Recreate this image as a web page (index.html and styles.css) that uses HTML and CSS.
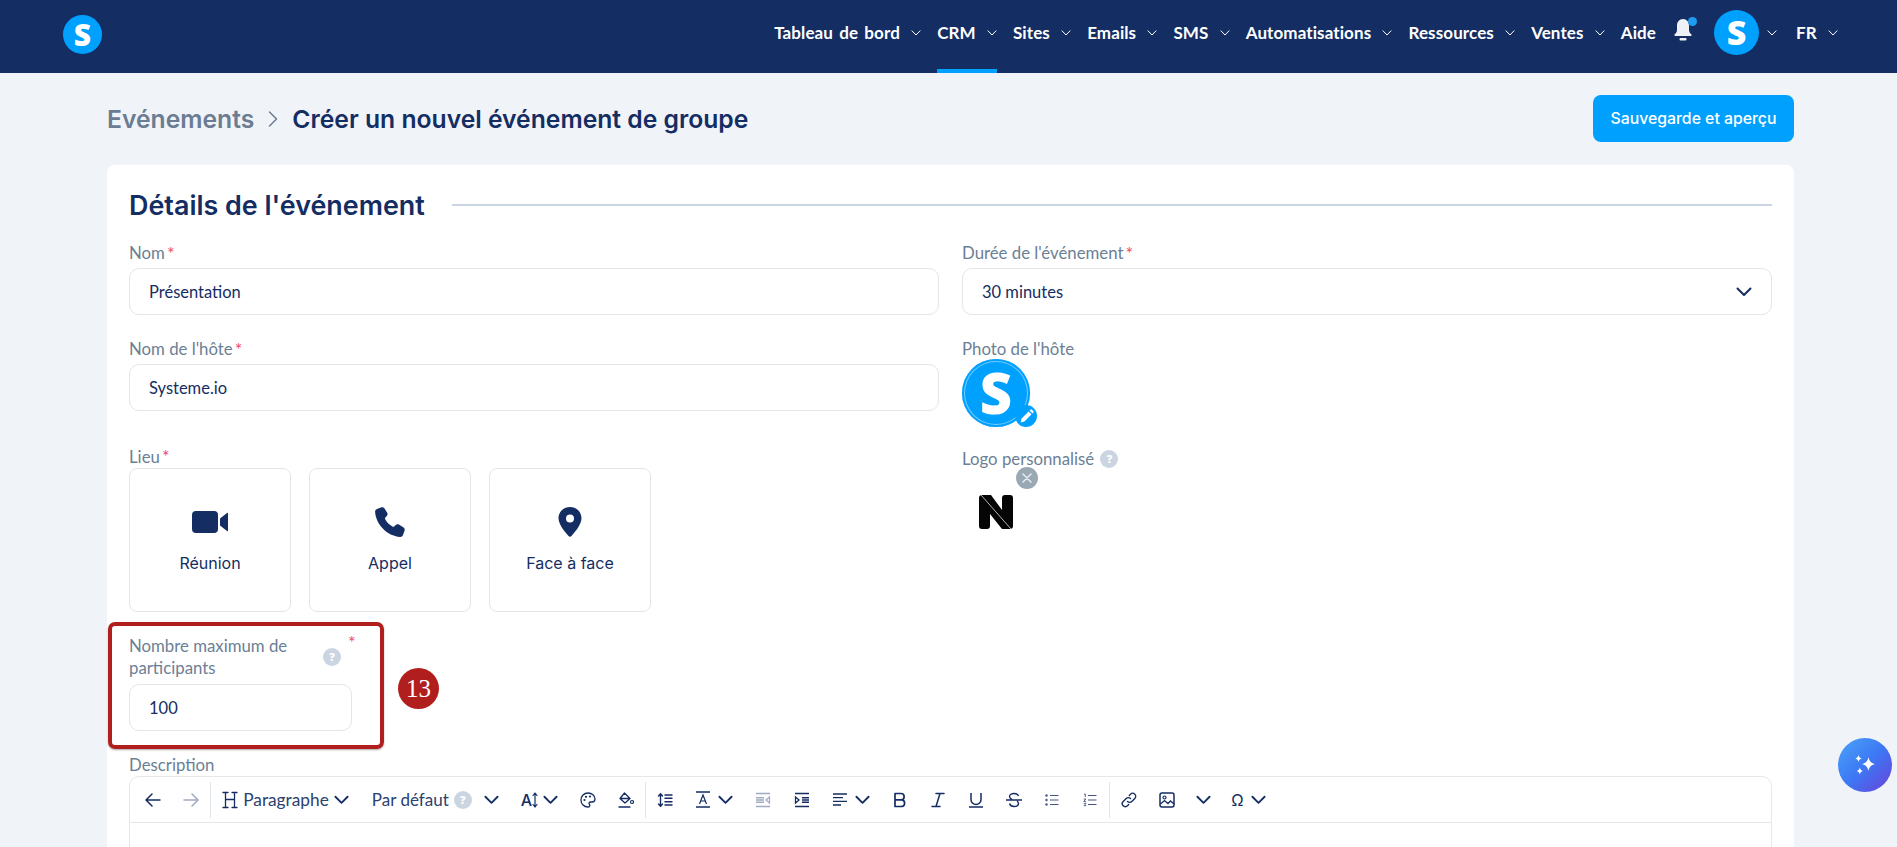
FILE: index.html
```html
<!DOCTYPE html>
<html lang="fr">
<head>
<meta charset="utf-8">
<title>Créer un nouvel événement de groupe</title>
<link rel="stylesheet" href="styles.css">
</head>
<body>
<svg class="sprite" width="0" height="0" aria-hidden="true">
  <symbol id="chev" viewBox="0 0 16 10"><path d="M1.500 1.500 8 8l6.500-6.500" fill="none" stroke="currentColor" stroke-width="2" stroke-linecap="round" stroke-linejoin="round"/></symbol>
  <symbol id="navchev" viewBox="0 0 10 6"><path d="M1 .8 5 5l4-4.200" fill="none" stroke="currentColor" stroke-width="1" stroke-linecap="round" stroke-linejoin="round"/></symbol>
</svg>
<header class="topbar">
  <div class="brand">S</div>
  <nav class="nav">
    <a class="nav-item">Tableau de bord <svg class="nav-chev"><use href="#navchev"/></svg></a>
    <a class="nav-item active">CRM <svg class="nav-chev"><use href="#navchev"/></svg></a>
    <a class="nav-item">Sites <svg class="nav-chev"><use href="#navchev"/></svg></a>
    <a class="nav-item">Emails <svg class="nav-chev"><use href="#navchev"/></svg></a>
    <a class="nav-item">SMS <svg class="nav-chev"><use href="#navchev"/></svg></a>
    <a class="nav-item">Automatisations <svg class="nav-chev"><use href="#navchev"/></svg></a>
    <a class="nav-item">Ressources <svg class="nav-chev"><use href="#navchev"/></svg></a>
    <a class="nav-item">Ventes <svg class="nav-chev"><use href="#navchev"/></svg></a>
    <a class="nav-item">Aide</a>
    <span class="bell">
      <svg viewBox="0 0 18 23" width="18" height="23"><path d="M9 0c3.800 0 6 3 6 6.500v4.500c0 2 1 3.200 2.300 4.300.7.600.3 1.700-.6 1.700H1.300c-.9 0-1.300-1.100-.6-1.700C2 14.200 3 13 3 11V6.500C3 3 5.200 0 9 0z" fill="#eef1f6"/><rect x="5.500" y="19" width="7" height="2.500" rx="1" fill="#eef1f6"/></svg>
      <i class="bell-dot"></i>
    </span>
    <span class="nav-avatar">S</span>
    <svg class="nav-chev avatar-chev"><use href="#navchev"/></svg>
    <a class="nav-item lang">FR <svg class="nav-chev"><use href="#navchev"/></svg></a>
  </nav>
</header>

<main class="page">
  <div class="page-head">
    <h1 class="crumbs">
      <span class="crumb-parent">Evénements</span>
      <svg class="crumb-sep" viewBox="0 0 10 18" width="10" height="18"><path d="M1.500 2 8.500 9l-7 7" fill="none" stroke="#6b7c93" stroke-width="1.500" stroke-linecap="round" stroke-linejoin="round"/></svg>
      <span>Créer un nouvel événement de groupe</span>
    </h1>
    <button class="primary">Sauvegarde et aperçu</button>
  </div>

  <section class="card">
    <div class="card-title"><h2>Détails de l'événement</h2><span class="rule"></span></div>

    <div class="columns">
      <div class="col">
        <div class="field">
          <label class="label">Nom<em>*</em></label>
          <div class="input">Présentation</div>
        </div>
        <div class="field">
          <label class="label">Nom de l'hôte<em>*</em></label>
          <div class="input">Systeme.io</div>
        </div>
        <div class="field field-place">
          <label class="label">Lieu<em>*</em></label>
          <div class="places">
            <div class="place">
              <svg viewBox="0 0 36 24" width="36" height="24"><path d="M4 1h18a4 4 0 0 1 4 4v14a4 4 0 0 1-4 4H4a4 4 0 0 1-4-4V5a4 4 0 0 1 4-4zM28 8.500l7-5.500c.5-.4 1-.1 1 .5V20.500c0 .6-.5.9-1 .5l-7-5.500z" fill="#142d63"/></svg>
              <span>Réunion</span>
            </div>
            <div class="place">
              <svg viewBox="0 0 32 32" width="32" height="32"><path d="M7.500 1.300 3 3C1.700 3.500 1 4.700 1.100 6 2.200 18.800 13 29.800 26 31c1.300.1 2.500-.6 3-1.900l1.600-4.500c.4-1.100 0-2.300-1-3l-4.700-3c-.9-.6-2.100-.5-2.900.2l-1.800 1.600c-.5.400-1.200.5-1.800.2-3-1.700-5.500-4.300-7.200-7.300-.3-.6-.2-1.300.2-1.800l1.600-1.800c.7-.8.800-2 .2-2.900l-3-4.700C9.600 1.200 8.500.9 7.500 1.300z" fill="#142d63"/></svg>
              <span>Appel</span>
            </div>
            <div class="place">
              <svg viewBox="0 0 24 30" width="24" height="30"><path fill-rule="evenodd" d="M12 0C5.400 0 .5 5 .5 11.300c0 6.200 6.400 13.600 10 17.800.8.900 2.200.9 3 0 3.600-4.200 10-11.600 10-17.800C23.500 5 18.600 0 12 0zm0 7.500a4 4 0 1 1 0 8 4 4 0 0 1 0-8z" fill="#142d63"/></svg>
              <span>Face à face</span>
            </div>
          </div>
        </div>
        <div class="field field-max">
          <div class="callout"></div>
          <div class="callout-badge">13</div>
          <label class="label label-max"><span class="label-text">Nombre maximum de participants</span><i class="help">?</i><em>*</em></label>
          <div class="input">100</div>
        </div>
      </div>

      <div class="col">
        <div class="field">
          <label class="label">Durée de l'événement<em>*</em></label>
          <div class="input select">30 minutes
            <svg class="select-chev"><use href="#chev"/></svg>
          </div>
        </div>
        <div class="field field-photo">
          <label class="label">Photo de l'hôte</label>
          <div class="photo">
            <span class="photo-ring">S</span>
            <span class="photo-edit">
              <svg viewBox="0 0 14 14" width="15" height="15"><path d="M1.500 12.500l.9-3.600L9 2.300 11.700 5 5.100 11.600zM9.900 1.400l.8-.8a1 1 0 0 1 1.400 0l1.300 1.300a1 1 0 0 1 0 1.400l-.8.800z" fill="#fff"/></svg>
            </span>
          </div>
        </div>
        <div class="field field-logo">
          <label class="label">Logo personnalisé <i class="help">?</i></label>
          <div class="logo-box">
            <span class="logo-close">
              <svg viewBox="0 0 10 10" width="10" height="10"><path d="M1 1l8 8M9 1 1 9" stroke="#e8edf2" stroke-width="1.500" stroke-linecap="round"/></svg>
            </span>
            <svg class="logo-n" viewBox="0 0 34 34" width="34" height="34"><path d="M3 0h9l11 15V3a3 3 0 0 1 3-3h5a3 3 0 0 1 3 3v28a3 3 0 0 1-3 3h-8L11 19v12a3 3 0 0 1-3 3H3a3 3 0 0 1-3-3V3a3 3 0 0 1 3-3z" fill="#050505"/><path d="M2 0l30 34" stroke="#fff" stroke-width=".7"/></svg>
          </div>
        </div>
      </div>
    </div>

    <div class="field field-desc">
      <label class="label">Description</label>
      <div class="editor">
        <div class="toolbar">
          <button class="tb"><svg viewBox="0 0 16 14" width="16" height="14"><path d="M15 7H1.500M7 1 1 7l6 6" fill="none" stroke="#142d63" stroke-width="1.500" stroke-linecap="round" stroke-linejoin="round"/></svg></button>
          <button class="tb off"><svg viewBox="0 0 16 14" width="16" height="14"><path d="M1 7h13.500M9 1l6 6-6 6" fill="none" stroke="#142d63" stroke-width="1.500" stroke-linecap="round" stroke-linejoin="round"/></svg></button>
          <span class="sep"></span>
          <button class="tb wide tb-h"><svg viewBox="0 0 16 18" width="16" height="18"><path d="M3.500 1.500v15M12.500 1.500v15M3.500 8.500h9M1 1.500h5M10 1.500h5M1 16.500h5M10 16.500h5" fill="none" stroke="#142d63" stroke-width="1.300" stroke-linecap="round"/></svg><span class="tb-text">Paragraphe</span><svg class="chev"><use href="#chev"/></svg></button>
          <button class="tb wide tb-font"><span class="tb-text">Par défaut</span><i class="help">?</i><svg class="chev"><use href="#chev"/></svg></button>
          <button class="tb wide tb-size"><span class="tb-glyph">A</span><svg viewBox="0 0 6 16" width="6" height="16" class="tb-arrow"><path d="M3 1v14M1 3.500 3 1l2 2.500M1 12.500 3 15l2-2.500" fill="none" stroke="#142d63" stroke-width="1.200" stroke-linecap="round" stroke-linejoin="round"/></svg><svg class="chev"><use href="#chev"/></svg></button>
          <button class="tb"><svg viewBox="0 0 16 16" width="16" height="16"><path d="M8 1C4 1 1 4 1 8s3 7 7 7c1.300 0 1.800-.8 1.800-1.600 0-1-.8-1.300-.8-2.100 0-.9.700-1.300 1.500-1.300H12c1.800 0 3-1.200 3-3C15 3.500 12 1 8 1z" fill="none" stroke="#142d63" stroke-width="1.300"/><circle cx="4.500" cy="8" r="1.100" fill="#142d63"/><circle cx="6" cy="4.800" r="1.100" fill="#142d63"/><circle cx="10" cy="4.500" r="1.100" fill="#142d63"/></svg></button>
          <button class="tb"><svg viewBox="0 0 16 16" width="16" height="16"><path d="M6.500 1 12 6.500 7 11 2 6.500zM2.300 6.500h9.400M1 15h11" fill="none" stroke="#142d63" stroke-width="1.300" stroke-linejoin="round" stroke-linecap="round"/><circle cx="14" cy="10" r="1.500" fill="none" stroke="#142d63" stroke-width="1.200"/></svg></button>
          <span class="sep"></span>
          <button class="tb"><svg viewBox="0 0 16 16" width="16" height="16"><path d="M3.500 2v12M1.500 4l2-2.300L5.500 4M1.500 12l2 2.300 2-2.300M8 3h7M8 6.300h7M8 9.700h7M8 13h7" fill="none" stroke="#142d63" stroke-width="1.400" stroke-linecap="round" stroke-linejoin="round"/></svg></button>
          <button class="tb wide tb-color"><svg viewBox="0 0 16 17" width="16" height="17"><path d="M1 1h14M1 16h14" stroke="#142d63" stroke-width="1.500"/><path d="M4.500 13 8 4l3.500 9M5.700 10h4.600" fill="none" stroke="#142d63" stroke-width="1.200"/></svg><svg class="chev"><use href="#chev"/></svg></button>
          <button class="tb off"><svg viewBox="0 0 16 16" width="16" height="16"><path d="M1 1.500h14M1 14.500h14M1 5.800h8M1 8h8M1 10.200h8" stroke="#142d63" stroke-width="1.400"/><path d="M14.500 5 11 8l3.500 3z" fill="none" stroke="#142d63" stroke-width="1.200"/></svg></button>
          <button class="tb"><svg viewBox="0 0 16 16" width="16" height="16"><path d="M1 1.500h14M1 14.500h14M8 5.800h7M8 8h7M8 10.200h7" stroke="#142d63" stroke-width="1.400"/><path d="M1.500 5 5 8l-3.500 3z" fill="none" stroke="#142d63" stroke-width="1.300"/></svg></button>
          <button class="tb wide"><svg viewBox="0 0 16 16" width="16" height="16"><path d="M1 2h14M1 5.700h10M1 9.300h14M1 13h8" stroke="#142d63" stroke-width="1.300"/></svg><svg class="chev"><use href="#chev"/></svg></button>
          <button class="tb"><svg viewBox="0 0 14 16" width="14" height="16"><path d="M2 1.500h6a3 3 0 0 1 0 6.300H2zM2 7.800h6.800a3.400 3.400 0 0 1 0 6.700H2z" fill="none" stroke="#142d63" stroke-width="1.700" stroke-linejoin="round"/></svg></button>
          <button class="tb"><svg viewBox="0 0 14 16" width="14" height="16"><path d="M5 1.500h8M1 14.500h8M9 1.500l-4 13" fill="none" stroke="#142d63" stroke-width="1.500" stroke-linecap="round"/></svg></button>
          <button class="tb"><svg viewBox="0 0 14 16" width="14" height="16"><path d="M2 1v6.500a5 5 0 0 0 10 0V1M0 15h14" fill="none" stroke="#142d63" stroke-width="1.500"/></svg></button>
          <button class="tb"><svg viewBox="0 0 16 16" width="16" height="16"><path d="M12.500 4C12 2.500 10.500 1.500 8 1.500S3.500 2.800 3.500 4.500c0 1.500 1.500 2.500 3 3.500M11 9c1 .7 1.500 1.500 1.500 2.500 0 1.700-2 3-4.500 3s-4-1.300-4.500-3M0 8h16" fill="none" stroke="#142d63" stroke-width="1.400"/></svg></button>
          <button class="tb"><svg viewBox="0 0 14 14" width="14" height="14"><path d="M5 2.500h8.500M5 7h8.500M5 11.500h8.500" stroke="#43557e" stroke-width="1.200"/><circle cx="1.500" cy="2.500" r="1.200" fill="#43557e"/><circle cx="1.500" cy="7" r="1.200" fill="#43557e"/><circle cx="1.500" cy="11.500" r="1.200" fill="#43557e"/></svg></button>
          <button class="tb"><svg viewBox="0 0 14 14" width="14" height="14"><path d="M5 2.500h8.500M5 7h8.500M5 11.500h8.500" stroke="#43557e" stroke-width="1.200"/><path d="M1 1.300 2.300.9v3.200M.7 6h2.200L.8 8.400h2.200M.8 10.300h2.200l-1 1.200 1 1.200H.8" fill="none" stroke="#43557e" stroke-width=".9"/></svg></button>
          <span class="sep sep-tight"></span>
          <button class="tb"><svg viewBox="0 0 16 16" width="16" height="16"><path d="M6.500 9.500a3 3 0 0 0 4.300 0l3-3a3 3 0 0 0-4.300-4.300L8.300 3.400M9.500 6.500a3 3 0 0 0-4.300 0l-3 3a3 3 0 0 0 4.300 4.300l1.200-1.200" fill="none" stroke="#142d63" stroke-width="1.400" stroke-linecap="round"/></svg></button>
          <button class="tb"><svg viewBox="0 0 16 16" width="16" height="16"><rect x="1" y="1" width="14" height="14" rx="2" fill="none" stroke="#142d63" stroke-width="1.500"/><circle cx="5.500" cy="5.500" r="1.500" fill="none" stroke="#142d63" stroke-width="1.200"/><path d="M1.500 12 5.500 8.500l3.500 3 2.500-2.500 3.500 3" fill="none" stroke="#142d63" stroke-width="1.300"/></svg></button>
          <button class="tb tb-only"><svg class="chev"><use href="#chev"/></svg></button>
          <button class="tb wide tb-omega"><span class="tb-glyph tb-glyph-light">Ω</span><svg class="chev"><use href="#chev"/></svg></button>
        </div>
        <div class="editor-body"></div>
      </div>
    </div>
  </section>
</main>

<button class="assistant" aria-label="Assistant">
  <svg viewBox="0 0 28 28" width="28" height="28"><path d="M17.500 6c.8 4 2.500 6 6.500 7-4 1-5.700 3-6.500 7-.9-4-2.600-6-6.500-7 3.900-1 5.600-3 6.500-7zM7.500 4c.4 2 1.200 3 3.300 3.500-2.100.5-2.900 1.500-3.300 3.500-.4-2-1.200-3-3.300-3.500C6.300 7 7.100 6 7.500 4zM8.800 16.500c.4 2 1.200 3 3.200 3.500-2 .5-2.800 1.500-3.200 3.500-.4-2-1.200-3-3.300-3.500 2.100-.5 2.900-1.500 3.300-3.500z" fill="#fff"/></svg>
</button>
</body>
</html>
```

FILE: styles.css
```css
* { box-sizing: border-box; }
html, body { margin: 0; height: 847px; overflow: hidden; }
body { background: #f0f4f9; color: #142d63; font-family: Lato, "Open Sans", sans-serif; position: relative; }
.sprite { position: absolute; }

.topbar { height: 73px; background: #142d63; display: flex; align-items: center; justify-content: space-between; padding: 0 59px 8px 63px; }
.brand { width: 39px; height: 39px; margin-top: 3px; border-radius: 50%; background: #00a0ff; color: #fff; font: 800 30px/39px "Open Sans", sans-serif; text-align: center; }
.nav { display: flex; align-items: center; color: #fff; }
.nav-item { position: relative; display: flex; align-items: center; font: 700 17px/20px Lato, sans-serif; letter-spacing: .1px; word-spacing: 2px; white-space: pre; margin-right: 16px; }
.nav-chev { width: 10px; height: 6px; margin-left: 5px; color: #fff; }
.nav-item.active::after { content: ""; position: absolute; left: 0; right: 0; top: 46px; height: 4px; background: #00a0ff; }
.bell { position: relative; width: 18px; height: 23px; margin: -5px 22px 0 2px; }
.bell svg { display: block; }
.bell-dot { position: absolute; width: 9px; height: 9px; border-radius: 50%; background: #1f9cf0; top: -2px; right: -5px; }
.nav-avatar { width: 45px; height: 45px; border-radius: 50%; background: #00a0ff; color: #fff; font: 800 34px/45px "Open Sans", sans-serif; text-align: center; }
.avatar-chev { margin: 0 19px 0 8px; }
.lang { margin-right: 0; }

.page { padding: 22px 103px 0 107px; }
.page-head { display: flex; align-items: center; justify-content: space-between; height: 47px; margin-bottom: 23px; }
.crumbs { margin: 0; display: flex; align-items: center; gap: 14px; font: 600 24.7px/30px Inter, sans-serif; color: #142d63; }
.crumb-parent { color: #6b7c93; }
.primary { width: 201px; height: 47px; border: 0; border-radius: 8px; background: #00a0ff; color: #fff; font: 500 15.800px/20px Inter, sans-serif; }

.card { background: #fff; border-radius: 8px; padding: 23px 22px 0 22px; height: 700px; }
.card-title { display: flex; align-items: center; gap: 27px; height: 34px; margin-bottom: 20px; }
.card-title h2 { margin: 0; font: 600 26.900px/34px Inter, sans-serif; color: #142d63; white-space: nowrap; }
.rule { flex: 1; height: 2px; background: #cbd5e1; }

.columns { display: grid; grid-template-columns: 810px 810px; gap: 23px; }
.col { display: flex; flex-direction: column; min-width: 0; }
.field { display: flex; flex-direction: column; margin-bottom: 23px; }
.label { display: flex; align-items: center; height: 20px; padding-top: 2px; font: 400 16.800px/20px Lato, sans-serif; color: #6b7f95; margin-bottom: 6px; white-space: pre; }
.label em { color: #f0486e; font-style: normal; font-size: 18px; line-height: 18px; align-self: flex-start; margin-left: 2px; }
.input { height: 47px; border: 1px solid #e2e6ea; border-radius: 10px; background: #fff; display: flex; align-items: center; padding: 0 19px; font: 400 16.500px/20px Lato, sans-serif; color: #142d63; }
.select { justify-content: space-between; padding-right: 19px; }
.select-chev { width: 16px; height: 10px; color: #142d63; }

.field-place { margin-top: 13px; margin-bottom: 10px; }
.field-place .label { margin-bottom: 2px; height: 19px; padding-top: 0; }
.places { display: flex; gap: 18px; }
.place { width: 162px; height: 144px; border: 1px solid #e2e6ea; border-radius: 8px; display: flex; flex-direction: column; align-items: center; padding-top: 37px; font: 400 16px/20px Inter, sans-serif; color: #142d63; }
.place svg { height: 32px; margin-bottom: 15px; }

.field-max { position: relative; width: 223px; padding-top: 13px; margin-bottom: 0; height: 127px; }
.label-max { height: auto; padding-top: 0; line-height: 22px; white-space: normal; margin-bottom: 5px; align-items: center; }
.label-text { width: 199px; flex: none; }
.label-max .help { margin-left: -5px; }
.label-max em { margin-left: 7px; margin-top: -2px; }
.callout { position: absolute; left: -21px; top: 0; width: 276px; height: 127px; border: 4px solid #b01e1e; border-radius: 7px; box-shadow: 0 1px 2px rgba(0,0,0,.35); }
.callout-badge { position: absolute; left: 269px; top: 46px; width: 41px; height: 41px; border-radius: 50%; background: #b01e1e; color: #fff; font: 400 25px/41px "Liberation Serif", serif; text-align: center; }

.help { display: inline-block; width: 18px; height: 18px; border-radius: 50%; background: #cbd5e1; color: #fff; font: 800 11px/18px "Open Sans", sans-serif; text-align: center; flex: none; }

.field-photo { margin-bottom: 21px; }
.field-photo .label { margin-bottom: 1px; }
.photo { position: relative; width: 68px; height: 68px; }
.photo-ring { display: block; width: 68px; height: 68px; border-radius: 50%; background: #00a0ff; box-shadow: inset 0 0 0 2px #00a0ff, inset 0 0 0 3px rgba(255,255,255,.45); color: #fff; font: 800 56px/66px "Open Sans", sans-serif; text-align: center; }
.photo-edit { position: absolute; left: 53px; top: 46px; width: 22px; height: 22px; border-radius: 50%; background: #00a0ff; display: flex; align-items: center; justify-content: center; }
.field-logo .label { gap: 2px; margin-bottom: 1px; }
.logo-box { position: relative; height: 70px; }
.logo-close { position: absolute; left: 54px; top: -2px; width: 22px; height: 22px; border-radius: 50%; background: #9aa8b4; display: flex; align-items: center; justify-content: center; }
.logo-n { position: absolute; left: 17px; top: 26px; }

.field-desc { margin: 6px 0 0; }
.field-desc .label { margin-bottom: 1px; padding-top: 0; }
.editor { border: 1px solid #e2e8ec; border-radius: 10px 10px 0 0; height: 200px; }
.toolbar { display: flex; align-items: center; height: 46px; padding: 0 4px; border-bottom: 1px solid #e2e8ec; }
.tb { width: 38.100px; height: 36px; flex: none; border: 0; background: none; padding: 0; display: flex; align-items: center; justify-content: center; color: #142d63; font: 400 17.300px/20px Lato, sans-serif; }
.tb.off { opacity: .4; }
.tb.wide { width: auto; padding: 0 11px; justify-content: flex-start; gap: 7px; }
.chev { width: 15px; height: 10px; color: #142d63; flex: none; }
.sep { width: 1px; height: 36px; background: #dfe4e9; flex: none; }
.tb-h { gap: 5px !important; }
.tb-font { padding-left: 12px !important; gap: 5px !important; }
.tb-font .tb-text { font-size: 17px; }
.tb-font .chev { margin-left: 7px; }
.tb-text { color: #2b4170; white-space: nowrap; }
.tb-glyph { font: 500 16px/16px Inter, sans-serif; color: #142d63; }
.tb-glyph-light { font-weight: 400; }
.tb-size { gap: 0 !important; }
.tb-arrow { margin-right: 5px; }
.tb-only { width: 34px; }

.assistant { position: absolute; left: 1838px; top: 738px; width: 54px; height: 54px; border: 0; padding: 0; border-radius: 50%; background: linear-gradient(135deg, #4aa5f7 0%, #3d78f5 50%, #6a42d8 100%); display: flex; align-items: center; justify-content: center; }
```
